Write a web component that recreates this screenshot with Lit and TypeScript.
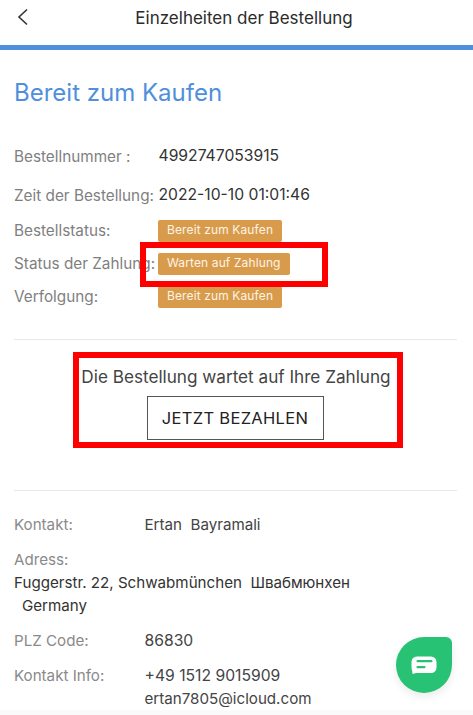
import { LitElement, html, css } from "lit";
import { customElement } from "lit/decorators.js";

@customElement("app-root")
export class AppRoot extends LitElement {
  static styles = css`
    :host { display: block; width: 473px; height: 715px; overflow: hidden; position: relative; background: #fff; font-family: Inter, "Noto Sans", sans-serif; font-size: 15px; color: #333; }
    .top { height: 45px; display: flex; align-items: center; justify-content: center; position: relative; font-size: 17px; color: #2b2b2b; padding: 0 0 9px 15px; box-sizing: border-box; }
    .back { position: absolute; left: 15.5px; top: 7px; width: 14px; height: 20px; }
    .bar { height: 5px; background: #4f8fdc; }
    .title { margin: 28px 0 0 14px; font-size: 24px; line-height: 30px; color: #4f8fdc; }
    .info { margin: 37px 0 0 14px; display: grid; grid-template-columns: 144.5px 1fr; align-items: center; }
    .lab { color: #7f7f7f; font-size: 15.3px; white-space: nowrap; }
    .val { color: #333; font-size: 15.7px; line-height: 22px; }
    .r1 { grid-column: 1 / -1; display: grid; grid-template-columns: 144.5px 1fr; align-items: center; height: 22px; }
    .r2 { margin-top: 17px; }
    .tags { display: grid; grid-template-columns: 144px 1fr; row-gap: 11.5px; margin: 14px 0 0 14px; align-items: center; }
    .tag { justify-self: start; height: 21.5px; line-height: 20.5px; box-sizing: border-box; padding: 0 9px 0 9px; border-radius: 2px; background: #d89b4c; color: #fdf4e6; font-size: 12px; letter-spacing: .12px; white-space: nowrap; }
    .line { height: 1px; background: #e8e8e8; margin: 0 16px 0 14px; }
    .l1 { margin-top: 31px; }
    .pay { height: 150px; display: flex; flex-direction: column; align-items: center; box-sizing: border-box; padding: 26px 0 0; }
    .msg { font-size: 17.15px; line-height: 22px; color: #444; margin-left: -1px; }
    .btn { margin-top: 8px; margin-left: -3px; width: 177px; height: 44px; box-sizing: border-box; border: 1px solid #555; display: flex; align-items: center; justify-content: center; font-size: 16.5px; color: #222; letter-spacing: .3px; }
    .contact { padding: 22px 0 0 14px; display: grid; grid-template-columns: 130.5px 1fr; font-size: 15.15px; line-height: 23px; color: #444; }
    .contact .lab { font-size: 15.15px; color: #8a8a8a; }
    .num { font-size: 15.7px; }
    .wide { grid-column: 1 / -1; color: #333; }
    .ind { padding-left: 8px; }
    .gap { margin-top: 12px; }
    .box { position: absolute; border: 6px solid #f00; box-sizing: border-box; pointer-events: none; }
    .b1 { left: 140px; top: 242px; width: 188px; height: 45px; }
    .b2 { left: 73px; top: 352px; width: 330px; height: 96px; }
    .fab { position: absolute; left: 396px; top: 637px; width: 56px; height: 56px; background: #27c273; border-radius: 50% 6px 50% 50%; box-shadow: 0 4px 8px rgba(0,0,0,.08); display: flex; align-items: center; justify-content: center; }
    .foot { position: absolute; left: 0; right: 0; bottom: 0; height: 5px; background: #fafafa; }
  `;
  render() {
    return html`
      <div class="top">
        <svg class="back" viewBox="0 0 14 20" fill="none" stroke="#333" stroke-width="1.6"><path d="M11 2.5 L3 10 L11 17.5"/></svg>
        Einzelheiten der Bestellung
      </div>
      <div class="bar"></div>
      <div class="title">Bereit zum Kaufen</div>
      <div class="info">
        <div class="r1"><span class="lab">Bestellnummer :</span><span class="val">4992747053915</span></div>
        <div class="r1 r2"><span class="lab">Zeit der Bestellung:</span><span class="val">2022-10-10 01:01:46</span></div>
      </div>
      <div class="tags">
        <span class="lab">Bestellstatus:</span><span class="tag">Bereit zum Kaufen</span>
        <span class="lab">Status der Zahlung:</span><span class="tag">Warten auf Zahlung</span>
        <span class="lab">Verfolgung:</span><span class="tag">Bereit zum Kaufen</span>
      </div>
      <div class="line l1"></div>
      <div class="pay">
        <div class="msg">Die Bestellung wartet auf Ihre Zahlung</div>
        <div class="btn">JETZT BEZAHLEN</div>
      </div>
      <div class="line"></div>
      <div class="contact">
        <span class="lab">Kontakt:</span><span>Ertan&nbsp; Bayramali</span>
        <span class="lab gap">Adress:</span><span></span>
        <span class="wide">Fuggerstr. 22, Schwabmünchen&nbsp; Швабмюнхен</span>
        <span class="wide ind">Germany</span>
        <span class="lab gap">PLZ Code:</span><span class="gap num">86830</span>
        <span class="lab gap">Kontakt Info:</span><span class="gap num">+49 1512 9015909</span>
        <span></span><span>ertan7805@icloud.com</span>
      </div>
      <div class="foot"></div>
      <div class="box b1"></div>
      <div class="box b2"></div>
      <div class="fab">
        <svg width="26" height="18" viewBox="0 0 26 18"><path d="M6 0.5h14a5.500 5.500 0 0 1 5.500 5.500v5.500a5.500 5.500 0 0 1-5.500 5.500H6q-2 0-3.500 .8c-.7.300-1.300-.1-1.200-.9q.2-1.500-.3-2.700A8 8 0 0 1 .5 11.500V6A5.500 5.500 0 0 1 6 .5z" fill="#fff"/><rect x="5.500" y="4" width="16" height="2.200" rx="1" fill="#27c273"/><rect x="5.500" y="10" width="9" height="2.200" rx="1" fill="#27c273"/></svg>
      </div>
    `;
  }
}
